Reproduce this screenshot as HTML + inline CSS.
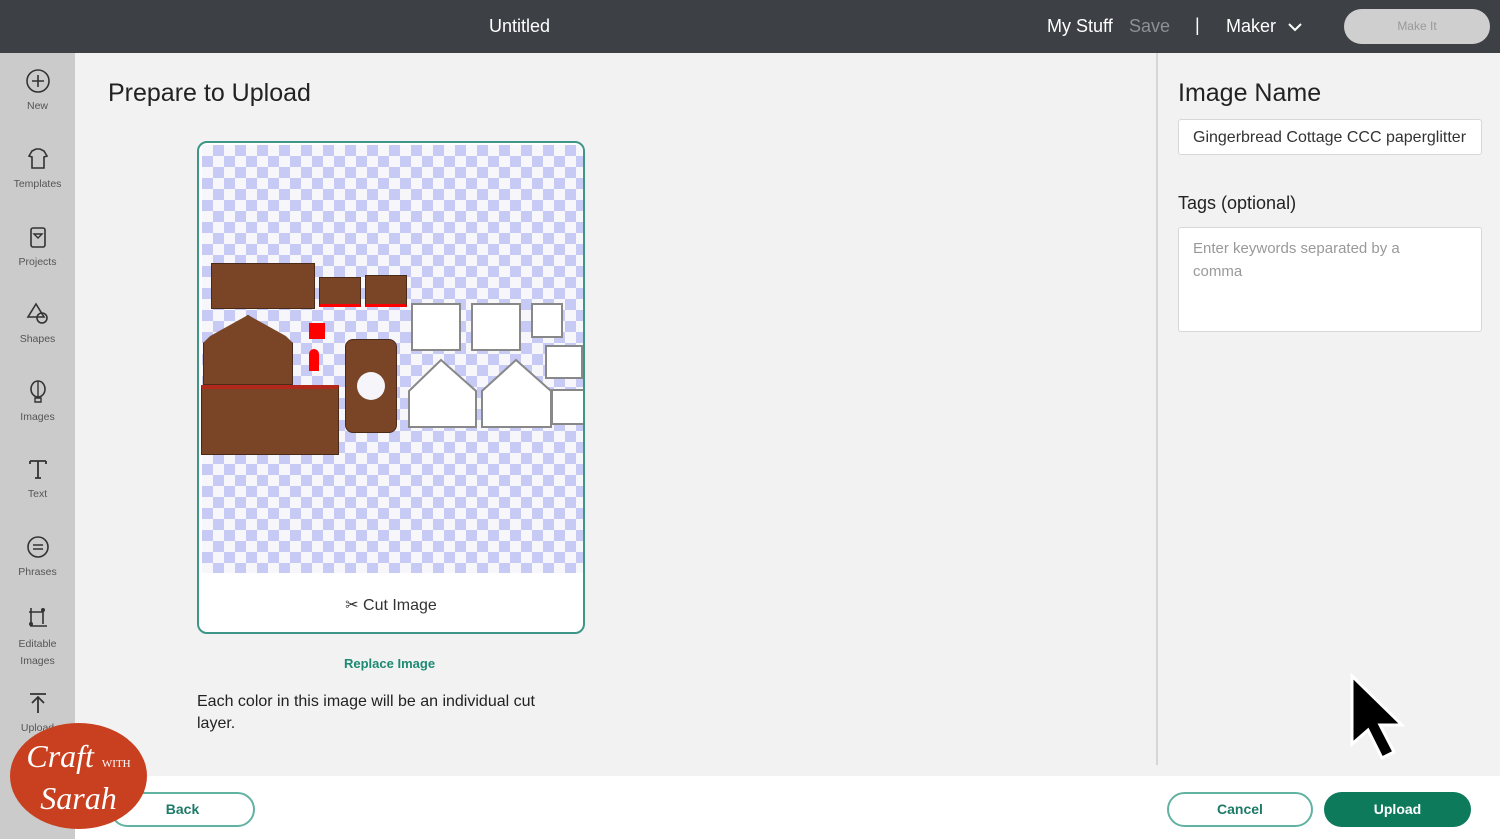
<!DOCTYPE html>
<html><head><style>
*{margin:0;padding:0;box-sizing:border-box}
body{width:1500px;height:839px;overflow:hidden;background:#f2f2f2;font-family:"Liberation Sans",sans-serif;position:relative}
.a{position:absolute}
.hdr{left:0;top:0;width:1500px;height:53px;background:#3d4045}
.side{left:0;top:53px;width:75px;height:786px;background:#cbcbcb}
.si{position:absolute;left:0;width:75px;text-align:center;font-size:10.5px;color:#555}
.si svg{display:block;margin:0 auto 6px}
.pc{background:#7a4526;border:1px solid #4a2a18}
.wp{background:#fff;border:2px solid #888}
</style></head><body>
<div class="a hdr"></div>
<div class="a" style="left:489px;top:16px;color:#fff;font-size:18px">Untitled</div>
<div class="a" style="left:1047px;top:16px;color:#fff;font-size:18px">My Stuff</div>
<div class="a" style="left:1129px;top:16px;color:#8d9096;font-size:18px">Save</div>
<div class="a" style="left:1195px;top:15px;color:#fff;font-size:18px">|</div>
<div class="a" style="left:1226px;top:16px;color:#fff;font-size:18px">Maker</div>
<svg class="a" style="left:1287px;top:21px" width="16" height="12"><path d="M2 3l6 6 6-6" stroke="#fff" stroke-width="2" fill="none"/></svg>
<div class="a" style="left:1344px;top:9px;width:146px;height:35px;border-radius:18px;background:#cfcfcf;color:#999;font-size:12px;text-align:center;line-height:35px">Make It</div>

<div class="a side"></div>
<div class="si" style="top:68px"><svg width="26" height="26"><circle cx="13" cy="13" r="11" stroke="#333" stroke-width="1.6" fill="none"/><path d="M13 7v12M7 13h12" stroke="#333" stroke-width="1.6"/></svg>New</div>
<div class="si" style="top:146px"><svg width="26" height="26"><path d="M7 5l4-2h4l4 2 3 5-3 1v11H7V11l-3-1z" stroke="#333" stroke-width="1.6" fill="none"/></svg>Templates</div>
<div class="si" style="top:224px"><svg width="26" height="26"><rect x="6" y="4" width="14" height="19" rx="2" stroke="#333" stroke-width="1.6" fill="none"/><path d="M9 10h8l-4 4z" stroke="#333" stroke-width="1.4" fill="none"/></svg>Projects</div>
<div class="si" style="top:301px"><svg width="26" height="26"><path d="M11 3l8 13H3z" stroke="#333" stroke-width="1.6" fill="none"/><circle cx="17" cy="17" r="5" stroke="#333" stroke-width="1.6" fill="none"/></svg>Shapes</div>
<div class="si" style="top:379px"><svg width="26" height="26"><ellipse cx="13" cy="10" rx="7" ry="8" stroke="#333" stroke-width="1.6" fill="none"/><path d="M13 2v16M10 19h6v4h-6z" stroke="#333" stroke-width="1.4" fill="none"/></svg>Images</div>
<div class="si" style="top:456px"><svg width="26" height="26"><path d="M5 5h16M13 5v17M10 22h6M5 5v3M21 5v3" stroke="#333" stroke-width="1.8" fill="none"/></svg>Text</div>
<div class="si" style="top:534px"><svg width="26" height="26"><circle cx="13" cy="13" r="10" stroke="#333" stroke-width="1.6" fill="none"/><path d="M8 11h10M8 15h10" stroke="#333" stroke-width="1.6"/></svg>Phrases</div>
<div class="si" style="top:604px;line-height:17px"><svg width="26" height="26"><path d="M6 4v18h16M4 8h14v12" stroke="#333" stroke-width="1.6" fill="none"/><circle cx="18" cy="6" r="2" fill="#333"/><circle cx="6" cy="20" r="2" fill="#333"/></svg>Editable<br>Images</div>
<div class="si" style="top:690px"><svg width="26" height="26"><path d="M5 4h16M13 8v15M7 13l6-6 6 6" stroke="#333" stroke-width="1.8" fill="none"/></svg>Upload</div>

<div class="a" style="left:108px;top:79px;font-size:25px;color:#222">Prepare to Upload</div>
<div class="a" style="left:1156px;top:53px;width:2px;height:712px;background:#d6d6d6"></div>

<div class="a" style="left:197px;top:141px;width:388px;height:493px;border:2px solid #3e9686;border-radius:10px;background:#fff;overflow:hidden">
 <div style="position:absolute;left:3px;top:2px;width:381px;height:428px;background-color:#f7f7fb;background-image:conic-gradient(#c6caf4 25%,transparent 0 50%,#c6caf4 0 75%,transparent 0);background-size:22px 22px"></div>
 <div class="pc" style="position:absolute;left:12px;top:120px;width:104px;height:46px"></div>
 <div class="pc" style="position:absolute;left:120px;top:134px;width:42px;height:30px;border-bottom:3px solid red"></div>
 <div class="pc" style="position:absolute;left:166px;top:132px;width:42px;height:32px;border-bottom:3px solid red"></div>
 <div class="pc" style="position:absolute;left:4px;top:172px;width:90px;height:70px;clip-path:polygon(8% 30%,50% 0,92% 30%,100% 40%,100% 100%,0 100%,0 40%)"></div>
 <div class="pc" style="position:absolute;left:2px;top:242px;width:138px;height:70px;border-top:4px solid #b2281a"></div>
 <div style="position:absolute;left:110px;top:180px;width:16px;height:16px;background:red"></div>
 <div style="position:absolute;left:110px;top:206px;width:10px;height:22px;background:red;border-radius:5px 5px 0 0"></div>
 <div class="pc" style="position:absolute;left:146px;top:196px;width:52px;height:94px;border-radius:8px"></div>
 <div style="position:absolute;left:158px;top:229px;width:28px;height:28px;border-radius:50%;background:#f5f5fa"></div>
 <div class="wp" style="position:absolute;left:212px;top:160px;width:50px;height:48px"></div>
 <div class="wp" style="position:absolute;left:272px;top:160px;width:50px;height:48px"></div>
 <div class="wp" style="position:absolute;left:332px;top:160px;width:32px;height:35px"></div>
 <div class="wp" style="position:absolute;left:346px;top:202px;width:38px;height:34px"></div>
 <div class="wp" style="position:absolute;left:352px;top:246px;width:34px;height:36px"></div>
 <svg style="position:absolute;left:208px;top:214px" width="146" height="72"><path d="M2 70V34L34 3l35 31v36zM75 70V34L109 3l35 31v36z" fill="#fff" stroke="#888" stroke-width="2"/></svg>
 <div style="position:absolute;left:0;top:452px;width:384px;text-align:center;font-size:16px;color:#333">✂ Cut Image</div>
</div>
<div class="a" style="left:344px;top:656px;font-size:13px;font-weight:bold;color:#1d8a73">Replace Image</div>
<div class="a" style="left:197px;top:691px;font-size:16px;color:#222;line-height:22px;width:370px">Each color in this image will be an individual cut layer.</div>

<div class="a" style="left:1178px;top:79px;font-size:25px;color:#222">Image Name</div>
<div class="a" style="left:1178px;top:119px;width:304px;height:36px;background:#fff;border:1px solid #d8d8d8;border-radius:3px;padding:9px 12px 9px 14px;font-size:16px;color:#333;white-space:nowrap;overflow:hidden">Gingerbread Cottage CCC paperglitter</div>
<div class="a" style="left:1178px;top:193px;font-size:18px;color:#222">Tags (optional)</div>
<div class="a" style="left:1178px;top:227px;width:304px;height:105px;background:#fff;border:1px solid #d8d8d8;border-radius:3px;padding:9px 14px;font-size:15px;color:#999;line-height:23px"><div style="width:240px">Enter keywords separated by a comma</div></div>

<svg class="a" style="left:1346px;top:670px" width="62" height="95"><path d="M6 6v68l16-14 14 28 12-6-14-27h22z" fill="#000" stroke="#fff" stroke-width="3"/></svg>

<div class="a" style="left:75px;top:776px;width:1425px;height:63px;background:#fff"></div>
<div class="a" style="left:110px;top:792px;width:145px;height:35px;border:2px solid #62b2a2;border-radius:18px;text-align:center;line-height:31px;font-size:14px;font-weight:bold;color:#1d7a67">Back</div>
<div class="a" style="left:1167px;top:792px;width:146px;height:35px;border:2px solid #62b2a2;border-radius:18px;text-align:center;line-height:31px;font-size:14px;font-weight:bold;color:#1d7a67">Cancel</div>
<div class="a" style="left:1324px;top:792px;width:147px;height:35px;background:#0e7a5c;border-radius:18px;text-align:center;line-height:35px;font-size:14px;font-weight:bold;color:#fff">Upload</div>

<div class="a" style="left:10px;top:723px;width:137px;height:106px;border-radius:50%;background:#c8401f;color:#fff;font-family:'Liberation Serif',serif;font-style:italic;text-align:center">
 <div style="font-size:32px;margin-top:16px;line-height:34px">Craft <span style="font-size:11px;font-style:normal">WITH</span></div>
 <div style="font-size:32px;line-height:34px">Sarah</div>
</div>
</body></html>
